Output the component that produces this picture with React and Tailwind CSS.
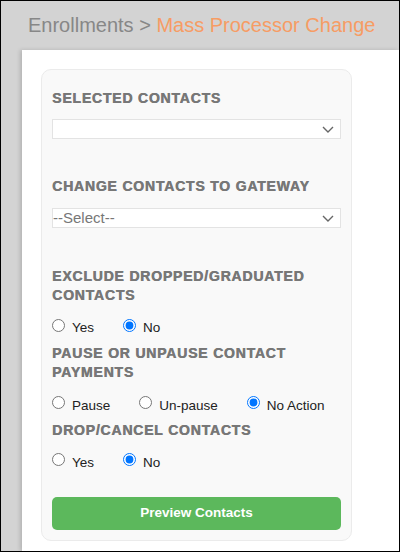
const Label = ({ children, className = '' }) => (
    <div
        className={`text-[14px] font-bold leading-[19px] tracking-[0.8px] text-[#777] uppercase [text-shadow:0.5px_0_0_#777] ${className}`}
    >
        {children}
    </div>
);

const Select = ({ value, className = '' }) => (
    <div className={`relative h-[20px] border border-[#e3e3e3] bg-white ${className}`}>
        <div className="pl-[0px] text-[15px] leading-[18px] text-[#777]">{value}</div>
        <svg
            className="absolute right-[6px] top-[6px]"
            width="12"
            height="7"
            viewBox="0 0 12 7"
        >
            <path d="M1 1 L6 6 L11 1" fill="none" stroke="#666" strokeWidth="1.4" />
        </svg>
    </div>
);

const RadioRow = ({ name, options, checked, className = '', radioClass = 'mt-[1px]' }) => (
    <div className={`flex items-start gap-[29px] h-[20px] ${className}`}>
        {options.map((opt) => (
            <label key={opt} className="flex items-start gap-[7px]">
                <input
                    type="radio"
                    name={name}
                    defaultChecked={opt === checked}
                    className={`m-0 w-[13px] h-[13px] accent-[#0075ff] ${radioClass}`}
                />
                <span className="text-[13.5px] leading-[20px] text-[#222]">{opt}</span>
            </label>
        ))}
    </div>
);

export default function App() {
    return (
        <div
            className="flex flex-col w-[400px] h-[552px] border border-black bg-[#d3d3d3] overflow-hidden"
            style={{ fontFamily: '"Liberation Sans", Arial, sans-serif' }}
        >
            <div className="h-[49px] pl-[27px] pt-[12px] text-[20px] leading-[24px] whitespace-nowrap">
                <span className="text-[#878787]">Enrollments &gt; </span>
                <span className="text-[#f79c64]">Mass Processor Change</span>
            </div>
            <div className="flex-1 ml-[21px] bg-white pt-[19px] pl-[19px] shadow-[-2px_0_4px_rgba(0,0,0,0.15)]">
                <div className="w-[311px] rounded-[10px] border border-[#ebebeb] bg-[#f9f9f9] px-[10px] pt-[19px] pb-[10px]">
                    <Label>Selected Contacts</Label>
                    <Select value="" className="mt-[11px]" />

                    <Label className="mt-[38px]">Change Contacts to Gateway</Label>
                    <Select value="--Select--" className="mt-[12px]" />

                    <Label className="mt-[39px]">
                        Exclude Dropped/Graduated
                        <br />
                        Contacts
                    </Label>
                    <RadioRow name="exclude" options={['Yes', 'No']} checked="No" className="mt-[13px]" />

                    <Label className="mt-[6px]">
                        Pause or Unpause Contact
                        <br />
                        Payments
                    </Label>
                    <RadioRow
                        name="pause"
                        options={['Pause', 'Un-pause', 'No Action']}
                        checked="No Action"
                        className="mt-[14px]"
                        radioClass="mt-0"
                    />

                    <Label className="mt-[5px]">Drop/Cancel Contacts</Label>
                    <RadioRow name="drop" options={['Yes', 'No']} checked="No" className="mt-[13px]" radioClass="mt-0" />

                    <button className="mt-[24px] w-full h-[33px] rounded-[5px] bg-[#5cb85c] text-[13.5px] font-bold text-white">
                        Preview Contacts
                    </button>
                </div>
            </div>
        </div>
    );
}
